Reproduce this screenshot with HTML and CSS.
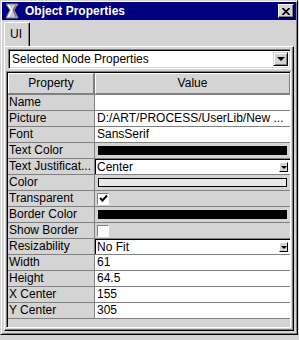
FILE: index.html
```html
<!DOCTYPE html>
<html lang="en">
<head>
    <meta charset="UTF-8">
    <title>Object Properties</title>
    <link rel="stylesheet" href="styles.css">
</head>
<body>

    <div class="window">
        <div class="titlebar">
            <svg class="app-icon" width="16" height="16" viewBox="0 0 16 16">
                <path d="M2 1 L14 1 L10 7 L14 15 L2 15 L6 7 Z" fill="#c8c8c8" stroke="#808080"/>
                <path d="M4 2 L8 7 L4 14" fill="none" stroke="#fff" stroke-width="1.5"/>
                <path d="M12 2 L9 7 L12 14" fill="none" stroke="#606060"/>
            </svg>
            <span class="title">Object Properties</span>
            <button class="close">
                <svg width="8" height="7" viewBox="0 0 8 7">
                    <path d="M0.5 0 L7.5 7 M7.5 0 L0.5 7" stroke="#000" stroke-width="1.6"/>
                </svg>
            </button>
        </div>

        <div class="tabs">
            <div class="tab">UI</div>
        </div>

        <div class="panel">
            <div class="combo">
                <span class="combo-text">Selected Node Properties</span>
                <span class="drop"><i class="arrow"></i></span>
            </div>

            <div class="viewport">
                <div class="grid">
                    <div class="head">Property</div>
                    <div class="head">Value</div>

                    <div class="key">Name</div>
                    <div class="val"></div>

                    <div class="key">Picture</div>
                    <div class="val">D:/ART/PROCESS/UserLib/New ...</div>

                    <div class="key">Font</div>
                    <div class="val">SansSerif</div>

                    <div class="key">Text Color</div>
                    <div class="val gray"><span class="swatch black"></span></div>

                    <div class="key">Text Justificat...</div>
                    <div class="val cell-combo">Center<span class="mini-drop"><i class="arrow small"></i></span></div>

                    <div class="key">Color</div>
                    <div class="val gray"><span class="swatch outline"></span></div>

                    <div class="key">Transparent</div>
                    <div class="val gray"><span class="check">
                        <svg width="9" height="9" viewBox="0 0 9 9"><path d="M1 4 L3.5 6.5 L8 1.5" fill="none" stroke="#000" stroke-width="2"/></svg>
                    </span></div>

                    <div class="key">Border Color</div>
                    <div class="val gray"><span class="swatch black"></span></div>

                    <div class="key">Show Border</div>
                    <div class="val gray"><span class="check"></span></div>

                    <div class="key">Resizability</div>
                    <div class="val cell-combo">No Fit<span class="mini-drop"><i class="arrow small"></i></span></div>

                    <div class="key">Width</div>
                    <div class="val">61</div>

                    <div class="key">Height</div>
                    <div class="val">64.5</div>

                    <div class="key">X Center</div>
                    <div class="val">155</div>

                    <div class="key">Y Center</div>
                    <div class="val">305</div>
                </div>
            </div>
        </div>
    </div>

</body>
</html>
```

FILE: styles.css
```css
* { box-sizing: border-box; }
body { margin: 0; background: #d4d4d4; font-family: "Liberation Sans", Arial, sans-serif; font-size: 12px; color: #000; }

.window {
    width: 298px; height: 335px; padding: 1px;
    display: flex; flex-direction: column;
    background: #d4d4d4;
    border: 1px solid; border-color: #d4d4d4 #000 #000 #d4d4d4;
    box-shadow: inset 1px 1px #fff, inset -1px -1px #808080;
}

.titlebar {
    height: 18px; background: #000080; color: #fff;
    display: flex; align-items: center; padding: 0 2px 0 2px;
}
.app-icon { flex: none; margin-right: 5px; }
.title { font-weight: bold; font-size: 12px; letter-spacing: 0; }
.close {
    margin-left: auto; width: 16px; height: 14px; padding: 0;
    display: flex; align-items: center; justify-content: center;
    background: #d4d4d4; border: 1px solid; border-color: #fff #000 #000 #fff;
    box-shadow: inset -1px -1px #808080;
}

.tabs { display: flex; padding: 2px 0 0 2px; height: 26px; }
.tab {
    width: 26px; height: 24px; padding: 4px 0 0 5px;
    border: 1px solid; border-bottom: none; border-color: #fff #000 #000 #fff;
    border-radius: 2px 2px 0 0;
    box-shadow: inset -1px 0 #808080;
    font-size: 12px;
}

.panel {
    flex: 1; margin: 0 2px 2px 2px; padding: 2px 2px 2px 1px;
    border: 1px solid; border-color: #fff #000 #000 #fff;
    box-shadow: inset -1px -1px #808080;
    display: flex; flex-direction: column;
}

.combo {
    height: 20px; margin-left: 2px; display: flex; align-items: center; background: #fff;
    border: 1px solid; border-color: #808080 #fff #fff #808080;
    box-shadow: inset 1px 1px #000, inset -1px -1px #d4d4d4;
    padding: 0 2px 0 3px;
}
.combo-text { flex: 1; }
.drop {
    width: 15px; height: 14px; display: flex; align-items: center; justify-content: center;
    background: #d4d4d4; border: 1px solid; border-color: #d4d4d4 #000 #000 #d4d4d4;
    box-shadow: inset 1px 1px #fff, inset -1px -1px #808080;
}
.arrow { width: 0; height: 0; border-left: 4px solid transparent; border-right: 4px solid transparent; border-top: 4px solid #000; }
.arrow.small { border-left-width: 3px; border-right-width: 3px; border-top-width: 3px; }

.viewport {
    flex: 1; margin-top: 2px;
    border: 1px solid; border-color: #808080 #fff #fff #808080;
    box-shadow: inset 1px 1px #000;
    padding: 1px 0 0 1px;
}
.grid {
    display: grid; grid-template-columns: 86px 195px; grid-auto-rows: 15px;
    grid-template-rows: 21px; gap: 1px; background: #808080;
    width: 282px; padding-bottom: 1px;
}
.head {
    background: #d4d4d4; text-align: center; line-height: 19px;
    border: 1px solid; border-color: #fff #808080 #808080 #fff;
}
.key { background: #d4d4d4; padding-left: 1px; line-height: 15px; white-space: nowrap; overflow: hidden; }
.val { background: #fff; padding-left: 2px; line-height: 15px; white-space: nowrap; overflow: hidden; display: flex; align-items: center; }
.val.gray { background: #d4d4d4; }

.swatch { flex: 1; height: 9px; margin: 0 3px 0 1px; }
.swatch.black { background: #000; }
.swatch.outline { border: 1px solid #000; background: #e8e8e8; }

.check {
    width: 12px; height: 12px; margin-left: 0; background: #fff;
    border: 1px solid; border-color: #808080 #fff #fff #808080;
    display: flex; align-items: center; justify-content: center;
}

.cell-combo { border-top: 1px solid #000; border-left: 1px solid #000; line-height: 13px; padding-left: 1px; }
.mini-drop {
    margin-left: auto; margin-right: 2px; width: 9px; height: 10px;
    display: flex; align-items: center; justify-content: center;
    background: #d4d4d4; border: 1px solid; border-color: #fff #000 #000 #fff;
}
```
